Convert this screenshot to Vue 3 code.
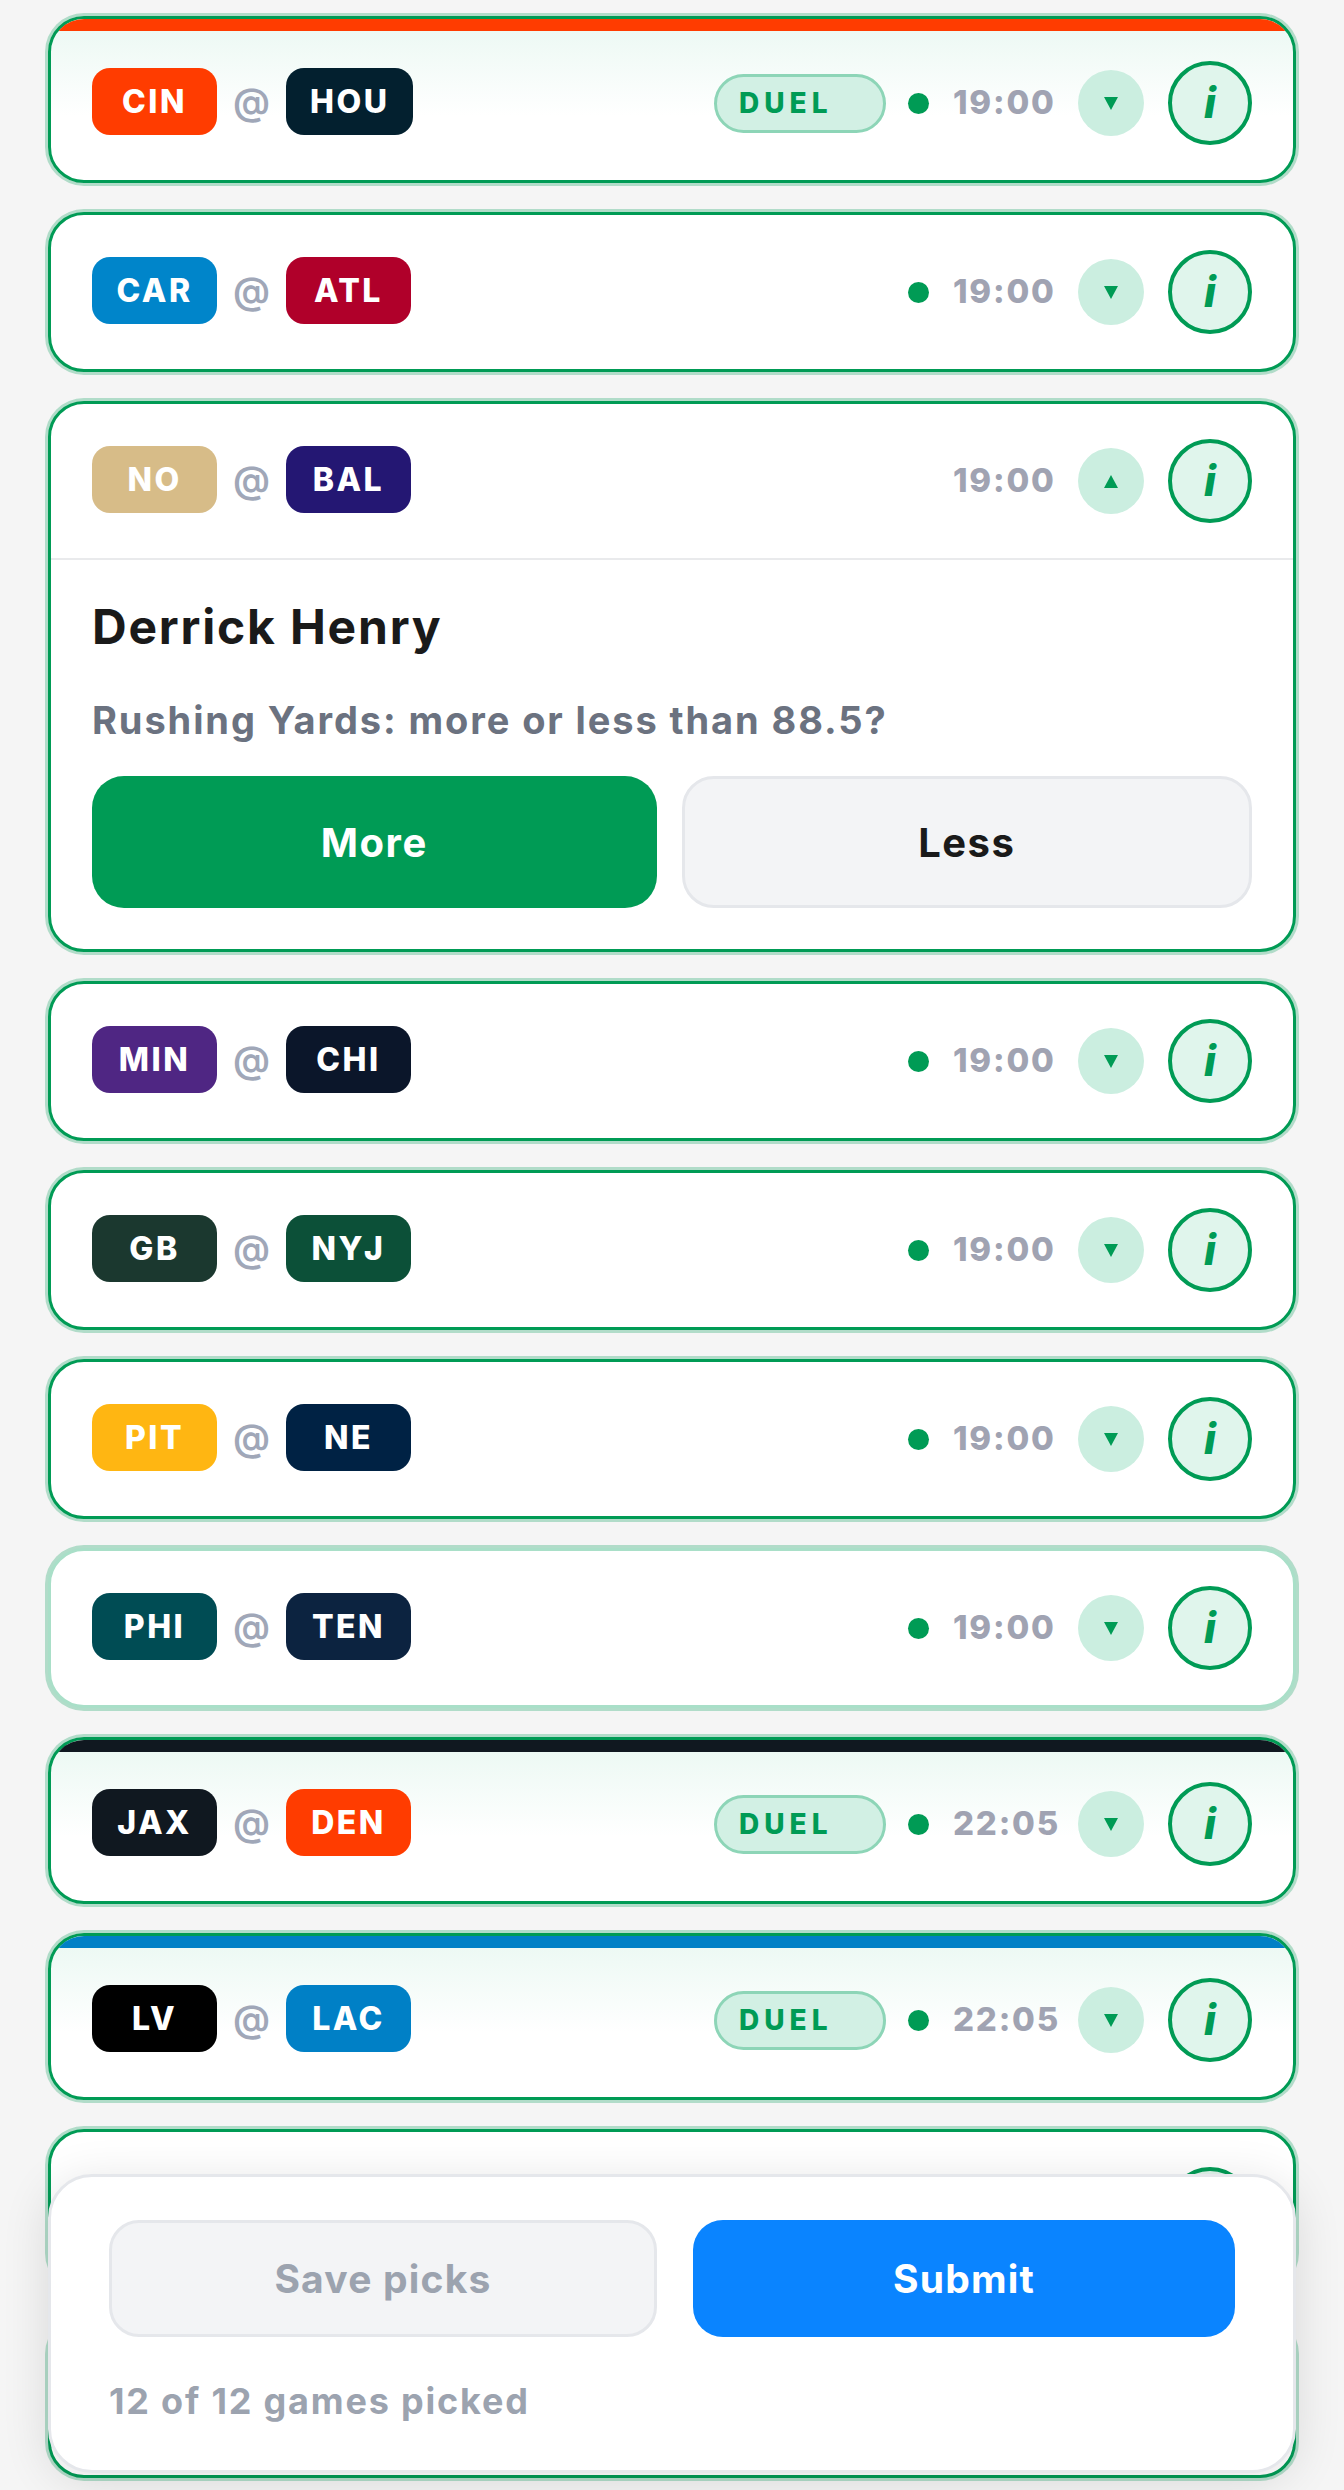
<template>
  <div class="page">
    <div class="list">
      <div
        v-for="game in games"
        :key="game.id"
        class="card"
        :class="{ duel: game.stripe, pale: game.pale }"
      >
        <div v-if="game.stripe" class="stripe" :style="{ background: game.stripe }"></div>
        <div class="head">
          <div class="teams">
            <template v-if="game.away">
              <span class="team" :style="{ background: game.awayColor }">{{ game.away }}</span>
              <span class="at">@</span>
              <span class="team" :style="{ background: game.homeColor }">{{ game.home }}</span>
            </template>
          </div>
          <span v-if="game.stripe" class="tag">DUEL</span>
          <span v-if="!game.open" class="dot"></span>
          <span class="time">{{ game.time }}</span>
          <button class="toggle">
            <svg width="14" height="13" viewBox="0 0 14 13">
              <polygon v-if="game.open" points="7,0 14,13 0,13" fill="#009b55" />
              <polygon v-else points="0,0 14,0 7,13" fill="#009b55" />
            </svg>
          </button>
          <button class="info">i</button>
        </div>
        <div v-if="game.open" class="body">
          <div class="player">Derrick Henry</div>
          <div class="question">Rushing Yards: more or less than 88.5?</div>
          <div class="choices">
            <button class="choice more">More</button>
            <button class="choice less">Less</button>
          </div>
        </div>
      </div>
    </div>

    <div class="panel">
      <div class="actions">
        <button class="action save">Save picks</button>
        <button class="action submit">Submit</button>
      </div>
      <div class="count">12 of 12 games picked</div>
    </div>
  </div>
</template>

<script setup>
// the last two games sit behind the panel, only their outline and info button show
const games = [
  { id: 1, away: 'CIN', awayColor: '#ff3c00', home: 'HOU', homeColor: '#03202f', time: '19:00', stripe: '#ff3c00' },
  { id: 2, away: 'CAR', awayColor: '#0085ca', home: 'ATL', homeColor: '#b0002a', time: '19:00' },
  { id: 3, away: 'NO', awayColor: '#d7bc88', home: 'BAL', homeColor: '#241773', time: '19:00', open: true },
  { id: 4, away: 'MIN', awayColor: '#4f2683', home: 'CHI', homeColor: '#0b162a', time: '19:00' },
  { id: 5, away: 'GB', awayColor: '#1b382f', home: 'NYJ', homeColor: '#0c5038', time: '19:00' },
  { id: 6, away: 'PIT', awayColor: '#ffb612', home: 'NE', homeColor: '#002244', time: '19:00' },
  { id: 7, away: 'PHI', awayColor: '#004c54', home: 'TEN', homeColor: '#0c2340', time: '19:00', pale: true },
  { id: 8, away: 'JAX', awayColor: '#101820', home: 'DEN', homeColor: '#ff3c00', time: '22:05', stripe: '#101820' },
  { id: 9, away: 'LV', awayColor: '#000000', home: 'LAC', homeColor: '#0080c6', time: '22:05', stripe: '#0080c6' },
  { id: 10, away: '', time: '' },
  { id: 11, away: '', time: '' }
]
</script>

<style>
body {
  background: #f5f5f5;
}
</style>

<style scoped>
.page {
  position: relative;
  height: 100vh;
  overflow: hidden;
  font-family: Inter, "Noto Sans", sans-serif;
}

.list {
  display: flex;
  flex-direction: column;
  gap: 29px;
  padding: 16px 48px 0;
}

.card {
  position: relative;
  flex: none;
  overflow: hidden;
  background: #fff;
  border: 3px solid #009b55;
  border-radius: 36px;
  box-shadow: 0 0 0 3px rgba(0, 155, 85, 0.28);
}

.card.pale {
  border-color: #a9dfc8;
}

.card.duel {
  background: linear-gradient(180deg, #edf9f4 8%, #fff 60%);
}

.stripe {
  position: absolute;
  top: 0;
  left: 0;
  right: 0;
  height: 12px;
}

.head {
  display: flex;
  align-items: center;
  padding: 35px 41px;
}

.duel .head {
  padding-top: 42px;
  padding-bottom: 35px;
}

.teams {
  display: flex;
  align-items: center;
  gap: 16px;
  margin-right: auto;
  margin-top: -3px;
}

.team {
  box-sizing: border-box;
  min-width: 125px;
  height: 67px;
  padding: 0 24px;
  border-radius: 18px;
  color: #fff;
  font-size: 32px;
  font-weight: 800;
  line-height: 67px;
  letter-spacing: 2.5px;
  text-align: center;
}

.at {
  color: #a0a7b8;
  font-size: 37px;
  font-weight: 600;
}

.tag {
  box-sizing: border-box;
  width: 172px;
  height: 59px;
  margin-right: 22px;
  padding-left: 22px;
  border: 3px solid #8dd5b7;
  border-radius: 30px;
  background: #d2f0e4;
  color: #009b55;
  font-size: 28px;
  font-weight: 800;
  line-height: 52px;
  letter-spacing: 5px;
}

.dot {
  width: 21px;
  height: 21px;
  margin-right: 24px;
  border-radius: 50%;
  background: #009b55;
}

.time {
  width: 102px;
  margin-top: -2px;
  color: #a0a3b2;
  font-size: 33px;
  font-weight: 800;
  letter-spacing: 1.8px;
  text-align: right;
  white-space: nowrap;
}

.toggle {
  display: flex;
  align-items: center;
  justify-content: center;
  width: 66px;
  height: 66px;
  margin-left: 23px;
  padding: 0;
  border: 0;
  border-radius: 50%;
  background: #cbeee0;
}

.info {
  box-sizing: border-box;
  width: 84px;
  height: 84px;
  margin-left: 24px;
  padding: 0;
  border: 4px solid #009b55;
  border-radius: 50%;
  background: #e0f5ec;
  color: #009b55;
  font-family: Inter, sans-serif;
  font-size: 42px;
  font-style: italic;
  font-weight: 800;
  line-height: 1;
}

.body {
  padding: 39px 41px 41px;
  border-top: 2px solid #e9eaec;
}

.player {
  color: #1a1a1a;
  font-size: 48px;
  font-weight: 700;
  line-height: 56px;
  letter-spacing: 1.8px;
}

.question {
  margin-top: 43px;
  color: #6b7280;
  font-size: 38px;
  font-weight: 700;
  line-height: 44px;
  letter-spacing: 1.9px;
}

.choices {
  display: flex;
  gap: 25px;
  margin-top: 34px;
}

.choice {
  flex: 1;
  height: 132px;
  border-radius: 32px;
  font-family: inherit;
  font-size: 40px;
  font-weight: 700;
  letter-spacing: 1.5px;
}

.more {
  border: 0;
  background: #009b55;
  color: #fff;
}

.less {
  border: 3px solid #e5e7eb;
  background: #f3f4f6;
  color: #1a1a1a;
}

.panel {
  position: absolute;
  left: 48px;
  right: 48px;
  bottom: 17px;
  z-index: 2;
  box-sizing: border-box;
  height: 299px;
  padding: 43px 58px 0;
  border: 3px solid #e5e7eb;
  border-radius: 44px;
  background: #fff;
  box-shadow: 0 8px 48px rgba(0, 0, 0, 0.12);
}

.actions {
  display: flex;
  gap: 36px;
}

.action {
  flex: 1;
  height: 117px;
  border-radius: 30px;
  font-family: inherit;
  font-size: 39px;
  font-weight: 700;
  letter-spacing: 1.2px;
}

.save {
  border: 3px solid #e5e7eb;
  background: #f3f4f6;
  color: #9ca3af;
}

.submit {
  border: 0;
  background: #0a84ff;
  color: #fff;
}

.count {
  margin-top: 42px;
  color: #9ca3af;
  font-size: 36px;
  font-weight: 700;
  line-height: 44px;
  letter-spacing: 1.8px;
}
</style>
